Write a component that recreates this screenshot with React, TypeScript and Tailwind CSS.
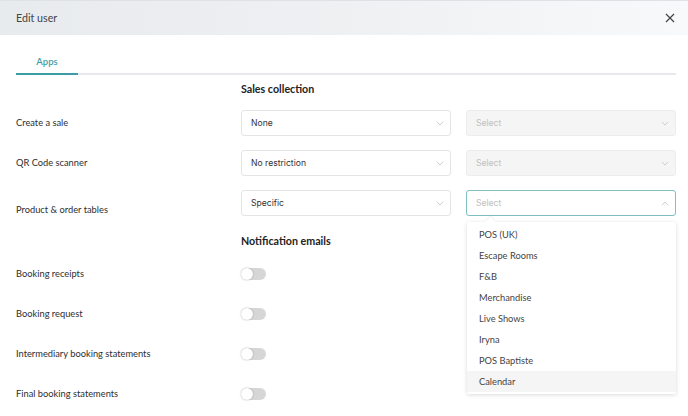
import React from "react";

const Chevron = ({ up = false }: { up?: boolean }) => (
  <svg width="8" height="5" viewBox="0 0 8 5" className="shrink-0">
    <path d={up ? "M0.8 4.3 L4 1 L7.2 4.3" : "M0.8 0.7 L4 4 L7.2 0.7"} fill="none" stroke="#c8c8c8" strokeWidth="0.9" />
  </svg>
);

const SelectBox = ({
  value,
  placeholder = false,
  disabled = false,
  active = false,
}: {
  value: string;
  placeholder?: boolean;
  disabled?: boolean;
  active?: boolean;
}) => (
  <div
    className={
      "h-[26px] rounded-[3px] border flex items-center justify-between pl-[9px] pr-[6px] text-[8.6px] " +
      (active
        ? "border-[#7fbfc2] bg-white"
        : disabled
        ? "border-[#ececec] bg-[#f5f5f5]"
        : "border-[#e4e4e4] bg-white")
    }
    style={{ fontFamily: "Inter, 'Liberation Sans', sans-serif" }}
  >
    <span className={placeholder ? "text-[#c0c0c0]" : "text-[#333]"}>{value}</span>
    <Chevron up={active} />
  </div>
);

const Toggle = () => (
  <div className="w-[25px] h-[12px] rounded-full bg-[#d6d6d6] relative">
    <div className="absolute left-0 top-0 w-[12px] h-[12px] rounded-full bg-white shadow-[0_0_2px_rgba(0,0,0,0.3)]" />
  </div>
);

const options = ["POS (UK)", "Escape Rooms", "F&B", "Merchandise", "Live Shows", "Iryna", "POS Baptiste", "Calendar"];
const toggles = ["Booking receipts", "Booking request", "Intermediary booking statements", "Final booking statements"];

export default function App() {
  const font = { fontFamily: "Lato, 'Noto Sans', sans-serif" };
  return (
    <div className="w-[688px] h-[416px] bg-white overflow-hidden relative text-[#2e2e2e]" style={font}>
      <div className="h-[35px] border-t border-[#dfe2e5] bg-gradient-to-r from-[#e8ebee] via-[#eef0f2] to-[#f8f9fa] flex items-center justify-between pl-4 pr-[13px]">
        <span className="text-[10.7px] text-[#444]">Edit user</span>
        <svg width="10" height="10" viewBox="0 0 10 10">
          <path d="M1 1 L9 9 M9 1 L1 9" stroke="#444" strokeWidth="1.2" />
        </svg>
      </div>

      <div className="px-4 pt-[17px]">
        <div className="flex border-b-2 border-[#e8e8f0] w-[660px]">
          <div className="w-[62px] h-[23px] -mb-[2px] border-b-2 border-[#3d9da3] flex items-center justify-center text-[#3d9da3] text-[9.5px] font-semibold">
            Apps
          </div>
        </div>

        <div className="grid grid-cols-[225px_210px_15px_210px] items-center">
          <div />
          <div className="col-span-3 h-[28px] flex items-center font-bold text-[10.7px] text-[#222]">Sales collection</div>

          <div className="text-[9.3px] h-[26px] flex items-center mt-[7px]">Create a sale</div>
          <div className="mt-[7px]"><SelectBox value="None" /></div>
          <div />
          <div className="mt-[7px]"><SelectBox value="Select" placeholder disabled /></div>

          <div className="text-[9.3px] h-[26px] flex items-center mt-[14px]">QR Code scanner</div>
          <div className="mt-[14px]"><SelectBox value="No restriction" /></div>
          <div />
          <div className="mt-[14px]"><SelectBox value="Select" placeholder disabled /></div>

          <div className="text-[9.3px] h-[26px] flex items-center mt-[14px] pt-[13px]">Product &amp; order tables</div>
          <div className="mt-[14px]"><SelectBox value="Specific" /></div>
          <div />
          <div className="mt-[14px]"><SelectBox value="Select" placeholder active /></div>

          <div />
          <div className="col-span-3 h-[26px] flex items-center font-bold text-[10.7px] text-[#222] mt-[12px]">Notification emails</div>

          {toggles.map((l, i) => (
            <React.Fragment key={l}>
              <div className={"text-[9.3px] h-[20px] flex items-center " + (i === 0 ? "mt-[10px]" : "mt-[20px]")}>{l}</div>
              <div className={i === 0 ? "mt-[10px]" : "mt-[20px]"}><Toggle /></div>
              <div />
              <div />
            </React.Fragment>
          ))}
        </div>
      </div>

      <div className="absolute left-[467px] top-[222px] w-[209px] bg-white rounded-[2px] shadow-[0_1px_4px_rgba(0,0,0,0.15)] py-[2px]">
        <div className="absolute -top-[4px] left-[20px] w-[7px] h-[7px] bg-white rotate-45 shadow-[-1px_-1px_1px_rgba(0,0,0,0.06)]" />
        {options.map((o, i) => (
          <div
            key={o}
            className={"h-[21px] flex items-center pl-[12px] text-[9.3px] text-[#444] relative " + (i === options.length - 1 ? "bg-[#f5f5f5]" : "")}
          >
            {o}
          </div>
        ))}
      </div>
    </div>
  );
}
